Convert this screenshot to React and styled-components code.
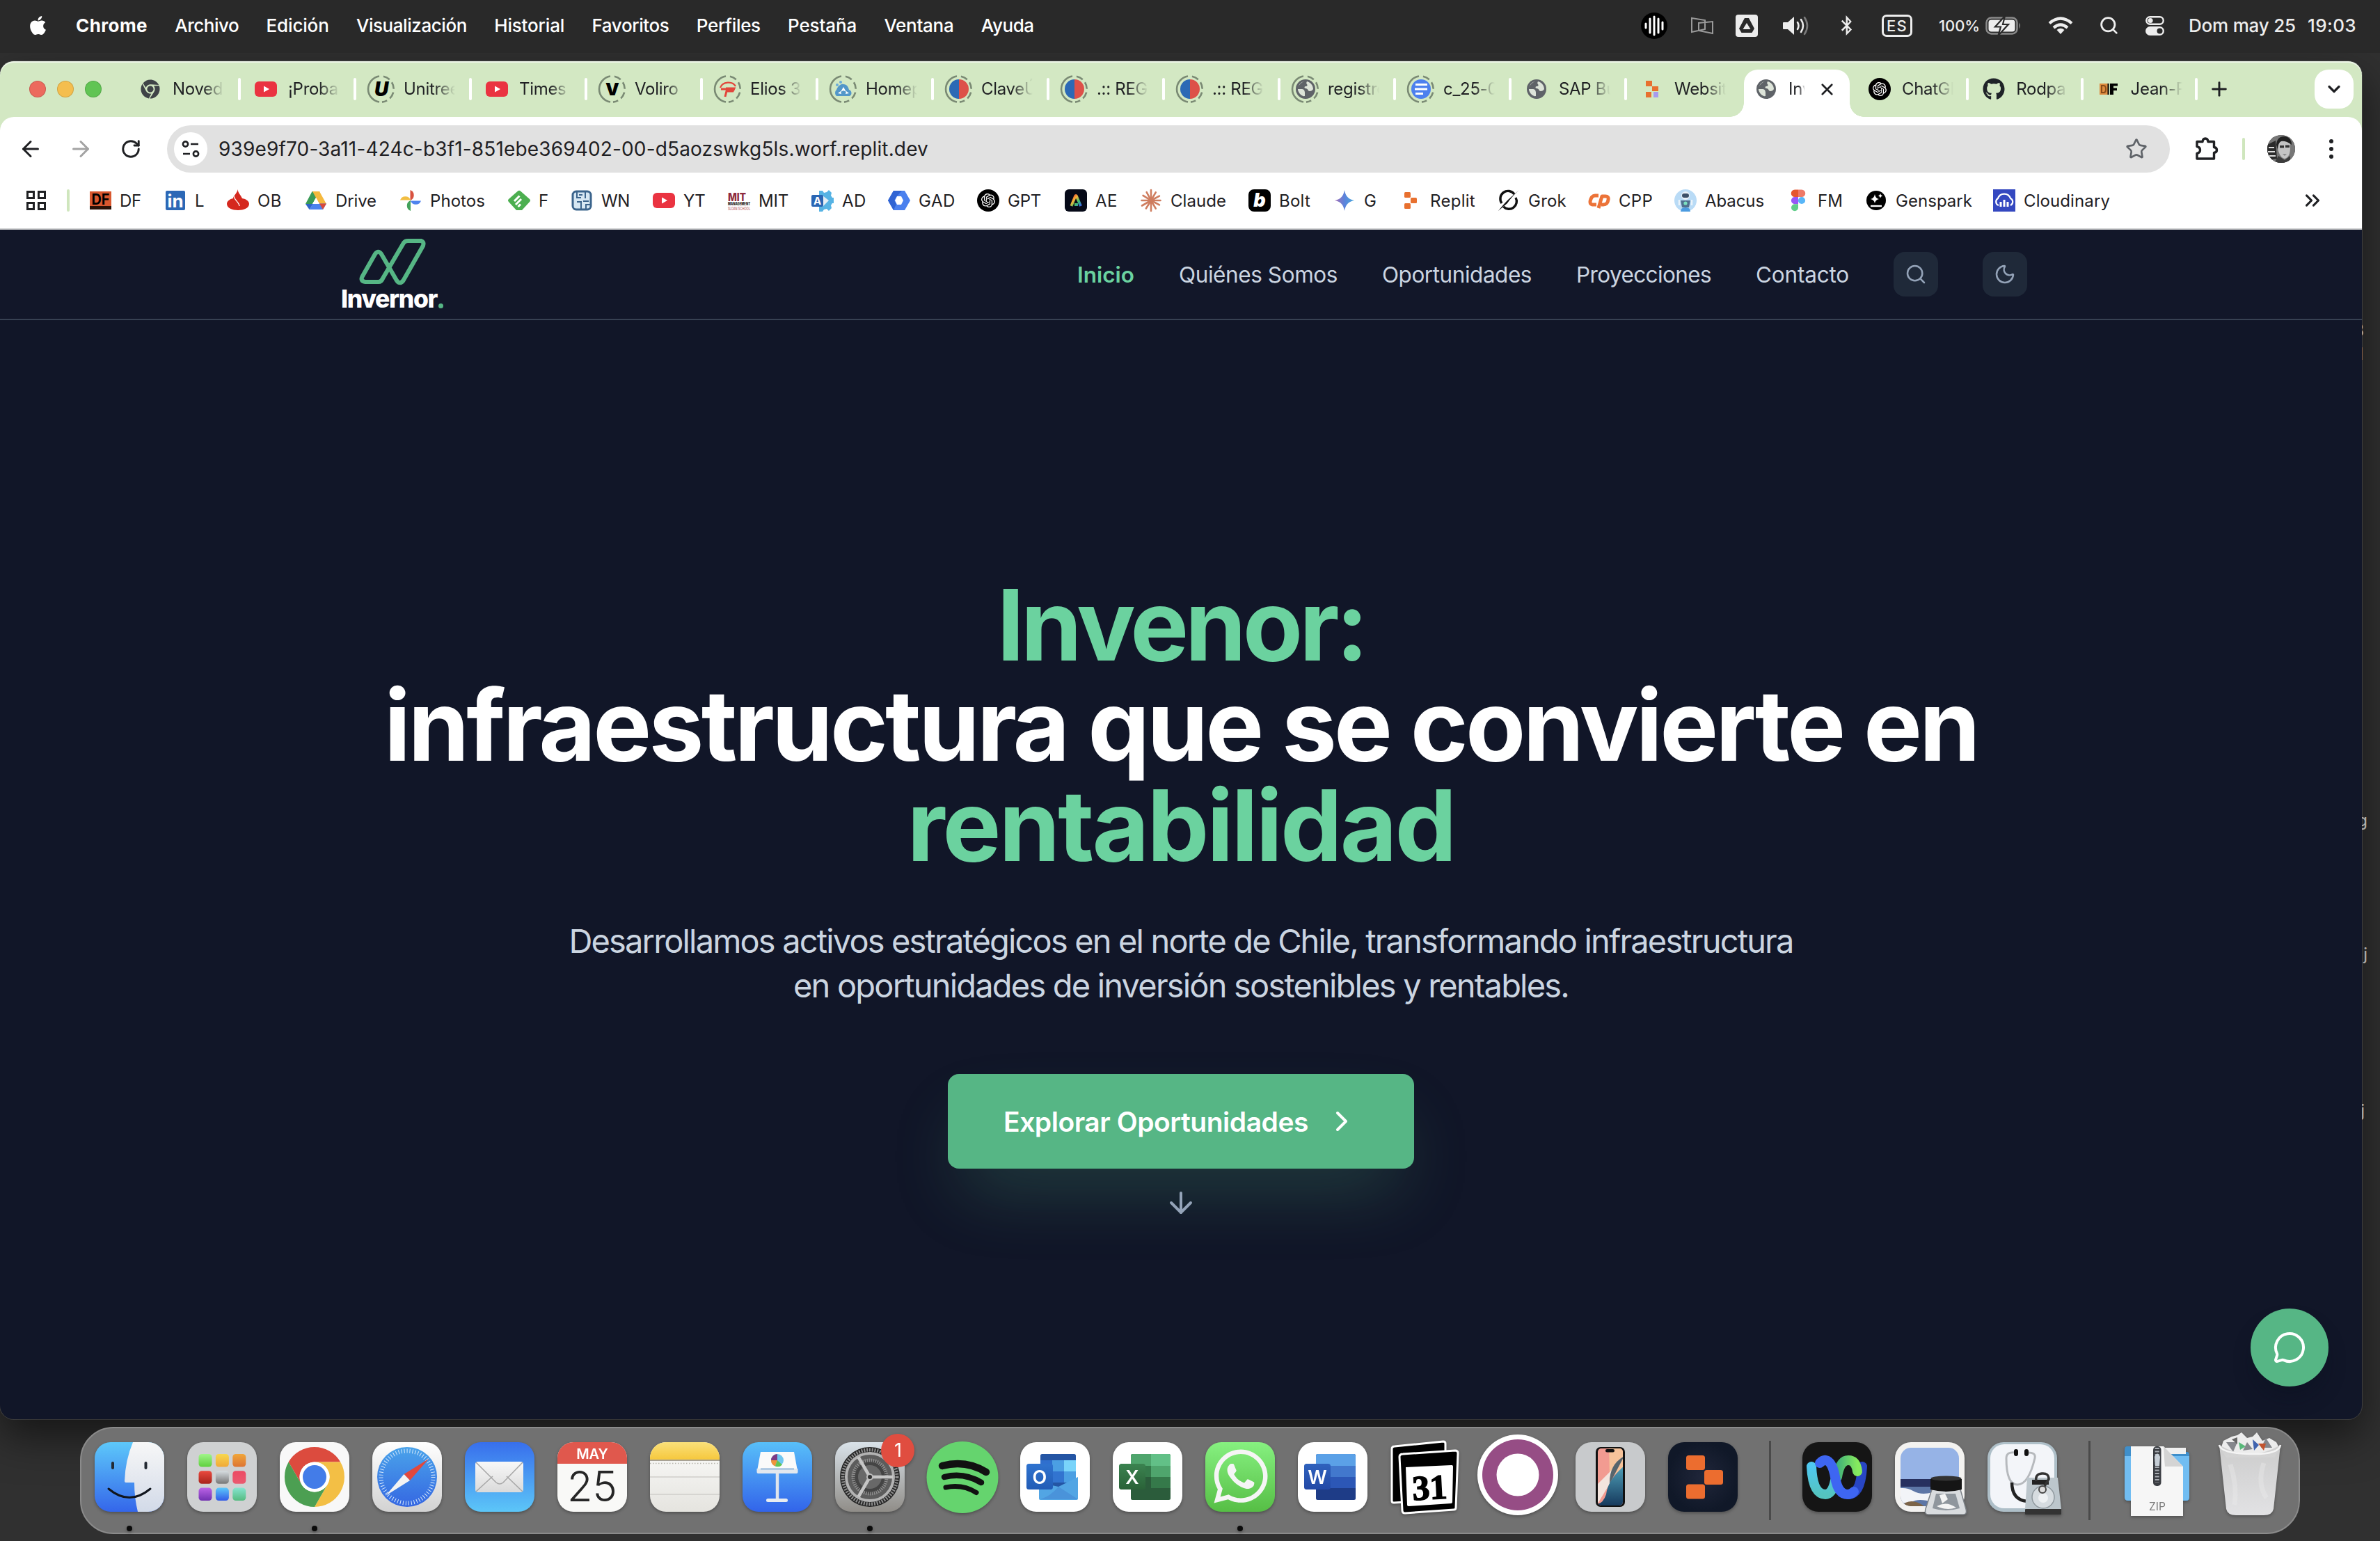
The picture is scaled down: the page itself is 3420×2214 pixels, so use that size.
import React, { useLayoutEffect, useRef, useState } from "react";
import styled, { createGlobalStyle } from "styled-components";
import {
  ArrowDown, ArrowLeft, ArrowRight, ChevronDown, ChevronRight, ChevronsRight,
  MessageCircle, Moon, Plus, RotateCw, Search, Star, X,
} from "lucide-react";
import { FaApple, FaBluetoothB, FaChrome, FaGithub, FaWhatsapp } from "react-icons/fa";
import { SiOpenai } from "react-icons/si";

const sans = `Inter, "Liberation Sans", sans-serif`;

const GlobalStyle = createGlobalStyle`
  * { box-sizing: border-box; }
  html, body { margin: 0; padding: 0; background: #2f2f2f; }
  body { font-family: ${sans}; width: 3420px; height: 2214px; overflow: hidden; }
  svg { display: block; flex: none; overflow: visible; }
`;

/* ---------- Text fitted to a width by tracking ---------- */

const FitSpan = styled.span`
  display: inline-block;
  white-space: pre;
`;

function Fit({ width, children }) {
  const ref = useRef(null);
  const [tracking, setTracking] = useState(0);
  useLayoutEffect(() => {
    const natural = ref.current.getBoundingClientRect().width;
    setTracking((width - natural) / children.length);
  }, [width, children]);
  return <FitSpan ref={ref} style={{ letterSpacing: `${tracking}px` }}>{children}</FitSpan>;
}

/* ---------- Desktop and menu bar ---------- */

const Desktop = styled.div`
  position: relative;
  display: flex;
  flex-direction: column;
  width: 3420px;
  height: 2214px;
  overflow: hidden;
  background: #303030;
`;

const DesktopLabel = styled.span`
  position: absolute;
  right: ${(p) => p.$right}px;
  top: ${(p) => p.$top}px;
  font-size: 24px;
  line-height: 30px;
  color: #e6e6e6;
`;

const MenuBar = styled.header`
  position: relative;
  z-index: 2;
  display: flex;
  align-items: center;
  height: 76px;
  padding: 0 35px 3px 39px;
  background: #292929;
  color: #fff;
  font-size: 26px;
`;

const MenuList = styled.nav`
  display: flex;
  gap: 39.3px;
  margin-left: 39px;
`;

const MenuEntry = styled.span`
  font-weight: ${(p) => (p.$bold ? 700 : 500)};
`;

const StatusArea = styled.div`
  display: flex;
  align-items: center;
  margin-left: auto;
  color: #ededed;
`;

const StatusItem = styled.div`
  display: flex;
  align-items: center;
  gap: 8px;
  width: ${(p) => p.$w}px;
  height: 40px;
  font-size: ${(p) => p.$size || 26}px;
  font-weight: 500;
`;

const LangBox = styled.div`
  display: flex;
  align-items: center;
  justify-content: center;
  width: 44px;
  height: 32px;
  border: 3px solid #ededed;
  border-radius: 7px;
  font-size: 22px;
  font-weight: 500;
`;

/* ---------- Browser window ---------- */

const Window = styled.main`
  position: relative;
  display: flex;
  flex-direction: column;
  width: 3394px;
  height: 1951px;
  margin-top: 12px;
  border-radius: 20px;
  background: #111628;
  box-shadow: 0 0 0 1px rgba(255, 255, 255, 0.12), 0 24px 60px rgba(0, 0, 0, 0.55);
`;

const TabStrip = styled.div`
  display: flex;
  align-items: center;
  height: 80px;
  flex: none;
  padding: 0 12px 0 42px;
  background: #d3e8c3;
  border-radius: 20px 20px 0 0;
  box-shadow: inset 0 2px 0 #eef6e8;
`;

const Lights = styled.div`
  display: flex;
  gap: 16px;
  width: 136px;
`;

const Light = styled.i`
  width: 24px;
  height: 24px;
  border-radius: 50%;
  background: ${(p) => p.$c};
  border: 1px solid rgba(0, 0, 0, 0.14);
`;

const TabItem = styled.div`
  display: flex;
  align-items: center;
  width: ${(p) => p.$w || 166}px;
  height: 80px;
  flex: none;
  padding-left: 18px;
  border-radius: 20px;
`;

const Favicon = styled.div`
  display: flex;
  align-items: center;
  justify-content: center;
  width: 40px;
  height: 40px;
  flex: none;
`;

const TabTitle = styled.span`
  width: ${(p) => p.$w || 74}px;
  margin-left: 12px;
  overflow: hidden;
  white-space: nowrap;
  font-size: 24px;
  letter-spacing: -0.3px;
  color: #1f2023;
  line-height: 40px;
  mask-image: linear-gradient(90deg, #000 60%, transparent 100%);
`;

const TabRule = styled.i`
  width: 4px;
  height: 32px;
  margin-left: auto;
  margin-right: -2px;
  border-radius: 2px;
  background: #fff;
`;

const ActiveTab = styled.div`
  position: relative;
  display: flex;
  align-items: center;
  width: 152px;
  height: 68px;
  flex: none;
  margin: 12px 5px 0 4px;
  padding: 0 22px 12px 12px;
  background: #fff;
  border-radius: 20px 20px 0 0;
  &::before, &::after {
    content: "";
    position: absolute;
    bottom: 0;
    width: 20px;
    height: 20px;
  }
  &::before {
    left: -20px;
    background: radial-gradient(circle at 0 0, transparent 19.5px, #fff 20px);
  }
  &::after {
    right: -20px;
    background: radial-gradient(circle at 100% 0, transparent 19.5px, #fff 20px);
  }
`;

const CloseMark = styled.span`
  margin-left: auto;
  margin-right: -3px;
`;

const NewTab = styled.span`
  margin-left: 17px;
`;

const TabSearch = styled.div`
  display: flex;
  align-items: center;
  justify-content: center;
  width: 56px;
  height: 56px;
  margin-left: auto;
  border-radius: 20px;
  background: #fff;
`;

const ToolbarBack = styled.div`
  flex: none;
  background: #d3e8c3;
`;

const Toolbar = styled.div`
  display: flex;
  align-items: center;
  height: 92px;
  padding: 0 20px 0 28px;
  background: #fff;
  color: #1f2023;
  border-radius: 20px 20px 0 0;
`;

const ToolIcon = styled.div`
  display: flex;
  align-items: center;
  justify-content: center;
  width: ${(p) => p.$w || 72}px;
  flex: none;
  color: ${(p) => p.$c || "#1f2023"};
`;

const Omnibox = styled.div`
  display: flex;
  align-items: center;
  width: 2878px;
  height: 68px;
  flex: none;
  padding: 0 32px 0 10px;
  border-radius: 34px;
  background: #e1e1e1;
  font-size: 28px;
`;

const SiteInfo = styled.div`
  display: flex;
  align-items: center;
  justify-content: center;
  width: 48px;
  height: 48px;
  margin-right: 16px;
  border-radius: 50%;
  background: #fff;
`;

const StarSlot = styled.span`
  margin-left: auto;
`;

const GreenRule = styled.i`
  width: 4px;
  height: 32px;
  flex: none;
  border-radius: 2px;
  background: #cfe6bd;
`;

const Avatar = styled.div`
  width: 40px;
  height: 40px;
  border-radius: 50%;
  overflow: hidden;
  background: #3a3a3a;
`;

const BookmarkBar = styled.div`
  display: flex;
  align-items: center;
  height: 70px;
  flex: none;
  padding: 0 54px 14px 38px;
  background: #fff;
  font-size: 24px;
  color: #1f2023;
  box-shadow: inset 0 -2px 0 #cfd0d2;
`;

const GridSlot = styled.div`
  width: 58px;
`;

const Bookmark = styled.div`
  display: flex;
  align-items: center;
  gap: 12px;
  width: ${(p) => p.$w}px;
  flex: none;
`;

const BookmarkIcon = styled.span`
  display: flex;
  align-items: center;
  justify-content: center;
  width: 32px;
  height: 32px;
  flex: none;
`;

const Overflow = styled.div`
  margin-left: auto;
`;

/* ---------- Web page ---------- */

const SiteHeader = styled.div`
  display: flex;
  align-items: center;
  justify-content: space-between;
  height: 130px;
  flex: none;
  padding: 0 481px 0 490px;
  border-bottom: 2px solid #374152;
  background: #121729;
`;

const Brand = styled.div`
  display: flex;
  flex-direction: column;
  align-items: flex-start;
  padding-top: 5px;
`;

const BrandName = styled.div`
  margin-top: -2px;
  font-size: 35.5px;
  line-height: 42px;
  font-weight: 800;
  color: #fff;
  display: flex;
`;

const BrandDot = styled.i`
  align-self: flex-end;
  width: 7px;
  height: 7px;
  border-radius: 50%;
  background: #56b685;
  margin: 0 0 8px 2px;
`;

const SiteNav = styled.nav`
  display: flex;
  align-items: center;
  gap: 64px;
`;

const NavLink = styled.a`
  font-size: 31.5px;
  font-weight: ${(p) => (p.$active ? 600 : 400)};
  color: ${(p) => (p.$active ? "#6bd29f" : "#cbd5e1")};
`;

const RoundButton = styled.button`
  display: flex;
  align-items: center;
  justify-content: center;
  width: 64px;
  height: 64px;
  padding: 0;
  border: 0;
  border-radius: 16px;
  background: #1f2939;
  color: #94a3b8;
`;

const Hero = styled.section`
  display: flex;
  flex-direction: column;
  align-items: center;
  padding-top: 366px;
`;

const Title = styled.h1`
  margin: 0 0 62px;
  display: flex;
  flex-direction: column;
  align-items: center;
  font-size: 141px;
  line-height: 144px;
  font-weight: 700;
  color: #fff;
`;

const TitleAccent = styled.span`
  color: #6bd29f;
`;

const Lead = styled.p`
  display: flex;
  flex-direction: column;
  align-items: center;
  margin: 0 0 95px;
  font-size: 47px;
  line-height: 64px;
  color: #cbd5e1;
`;

const Cta = styled.button`
  display: flex;
  align-items: center;
  justify-content: space-between;
  width: 670px;
  height: 136px;
  padding: 0 80px;
  border: 0;
  border-radius: 16px;
  background: #56b685;
  box-shadow: 0 50px 100px -24px rgba(86, 182, 133, 0.27);
  color: #fff;
  font-family: inherit;
  font-size: 39px;
  font-weight: 600;
`;

const ScrollHint = styled.div`
  margin-top: 25px;
  color: #94a3b8;
`;

const ChatButton = styled.button`
  position: absolute;
  right: 48px;
  bottom: 47px;
  display: flex;
  align-items: center;
  justify-content: center;
  width: 112px;
  height: 112px;
  border: 0;
  border-radius: 50%;
  background: #56b685;
  color: #fff;
  box-shadow: 0 20px 30px -6px rgba(10, 14, 28, 0.35);
`;

/* ---------- Dock ---------- */

const Dock = styled.footer`
  position: relative;
  display: flex;
  width: 3190px;
  height: 154px;
  margin: 11px 0 0 115px;
  padding-left: 2px;
  border: 2px solid #8b8b8b;
  border-radius: 48px;
  background: #717171;
`;

const DockSlot = styled.div`
  position: relative;
  display: flex;
  flex-direction: column;
  align-items: center;
  width: 133.05px;
  padding-top: 20px;
  flex: none;
  filter: drop-shadow(0 2px 2px rgba(0, 0, 0, 0.3));
`;

const RunningDot = styled.i`
  width: 8px;
  height: 8px;
  margin-top: 20px;
  border-radius: 50%;
  background: #0a0a0a;
`;

const DockRule = styled.i`
  width: 3px;
  height: 114px;
  margin: 18px 28.5px 0;
  background: #4a4a4a;
  flex: none;
`;

const Badge = styled.span`
  position: absolute;
  top: 8px;
  left: 83px;
  width: 48px;
  height: 48px;
  border-radius: 50%;
  background: #e04d40;
  color: #fff;
  font-size: 27px;
  line-height: 48px;
  text-align: center;
`;

/* ---------- Small drawings ---------- */

const Svg = ({ s = 32, vb = 32, children, ...rest }) => (
  <svg width={s} height={s} viewBox={`0 0 ${vb} ${vb}`} {...rest}>{children}</svg>
);

const YouTube = () => (
  <Svg><rect y="5" width="32" height="22" rx="6" fill="#ea3341" /><path d="M13 11.5v9l8-4.500z" fill="#fff" /></Svg>
);

const Globe = () => (
  <Svg s={28} vb={28}>
    <circle cx="14" cy="14" r="14" fill="#5f6368" />
    <path d="M12 3c-5 2-9 6-9 11l6 0c3 0 4 3 4 5v5c-4 1-9-4-10-9 0-7 4-11 9-12zM16 3c5 1 9 6 9 11-1 2-3 3-5 3-3 0-2-4-6-4-2 0-2-3 0-3 3 0 3-2 2-3s-1-2 0-4z" fill="#e8efe3" opacity=".92" />
  </Svg>
);

const OpenAi = () => (
  <Svg><circle cx="16" cy="16" r="16" fill="#000" /><SiOpenai x="6" y="6" size={20} color="#fff" /></Svg>
);

const HalfDisc = () => (
  <Svg s={28} vb={28}><path d="M14 0a14 14 0 0 0 0 28z" fill="#2c69b5" /><path d="M14 0a14 14 0 0 1 0 28z" fill="#dd5149" /></Svg>
);

const RingOutline = styled.span`
  position: relative;
  display: flex;
  align-items: center;
  justify-content: center;
  width: 40px;
  height: 40px;
  svg.ring { position: absolute; inset: 0; }
`;

const Ringed = ({ children }) => (
  <RingOutline>
    {children}
    <svg className="ring" width="40" height="40" viewBox="0 0 40 40" fill="none" stroke="#7a8a74" strokeWidth="2.600">
      <path d="M17 38.500A18.700 18.700 0 0 1 17 1.500" />
      <path d="M21 1.400A18.700 18.700 0 0 1 21 38.600" strokeDasharray="10 5" strokeDashoffset="-2" />
    </svg>
  </RingOutline>
);

const Glyph = styled.b`
  font-size: ${(p) => p.$s || 24}px;
  font-weight: 900;
  font-style: ${(p) => (p.$i ? "italic" : "normal")};
  color: #000;
  line-height: 1;
`;

const ReplitMark = ({ s = 28 }) => (
  <Svg s={s} vb={28} fill="#e8702f">
    <rect x="5" y="2" width="9" height="8" rx="1.500" /><rect x="14" y="10" width="9" height="8" rx="1.500" /><rect x="5" y="18" width="9" height="8" rx="1.500" />
  </Svg>
);

const Cloud = () => (
  <Svg s={28} vb={28}>
    <path d="M4 24a6 6 0 0 1 0-9c2-5 6-9 10-8 5 0 7 4 8 8 4 1 5 7 1 9z" fill="#5397c9" />
    <path d="M14 11l4 7-4-2-4 2zM6 20l4-3 1 4zM22 20l-4-3-1 4z" fill="#fff" />
    <circle cx="5" cy="8" r="2" fill="#6aabd8" /><circle cx="10" cy="4" r="2" fill="#6aabd8" />
  </Svg>
);

const DocDisc = () => (
  <Svg s={28} vb={28}>
    <circle cx="14" cy="14" r="14" fill="#4d80ee" />
    <path d="M6 7.500h17M5 14h18M6 20.500h11" stroke="#fff" strokeWidth="3.200" />
  </Svg>
);

const tabsBefore = [
  { title: "Noved", icon: <FaChrome size={28} color="#3f4347" /> },
  { title: "¡Proba", icon: <YouTube /> },
  { title: "Unitree", icon: <Ringed><Glyph $i $s={28}>U</Glyph></Ringed> },
  { title: "Times", icon: <YouTube /> },
  { title: "Voliro", icon: <Ringed><Glyph $s={25}>V</Glyph></Ringed> },
  { title: "Elios 3", icon: <Ringed><Svg s={28} vb={28}><path d="M3 12c3-9 18-10 22-2" stroke="#e2463c" fill="none" strokeWidth="2.200" /><path d="M4 14h20M11 13h12l-2 4h-9l-2 8" stroke="#e2463c" fill="none" strokeWidth="3" /></Svg></Ringed> },
  { title: "Homep", icon: <Ringed><Cloud /></Ringed> },
  { title: "ClaveÚ", icon: <Ringed><HalfDisc /></Ringed> },
  { title: ".:: REG", icon: <Ringed><HalfDisc /></Ringed> },
  { title: ".:: REG", icon: <Ringed><HalfDisc /></Ringed> },
  { title: "registro", icon: <Ringed><Globe /></Ringed> },
  { title: "c_25-0", icon: <Ringed><DocDisc /></Ringed> },
  { title: "SAP Bu", icon: <Globe /> },
  {
    title: "Websit",
    noRule: true,
    icon: (
      <Svg s={28} vb={28}>
        <rect x="5" y="2" width="9" height="8" fill="#e8702f" /><rect x="14" y="10" width="9" height="7" fill="#e8702f" />
        <rect x="5" y="18" width="8" height="8" fill="#e8702f" /><rect x="16" y="18" width="7" height="8" fill="#a79bf0" />
      </Svg>
    ),
  },
];

const tabsAfter = [
  { title: "ChatGPT", icon: <OpenAi /> },
  { title: "Rodpa", icon: <FaGithub size={32} color="#1f2328" /> },
  { title: "Jean-P", icon: <Svg><rect x="3" y="8" width="12" height="16" fill="#dd8b3f" /><path d="M6 11h3q3 0 3 5t-3 5h-3z" stroke="#8a4c1a" strokeWidth="2" fill="none" /><path d="M18 8h11v3.500h-6v3h5v3.500h-5v6h-5z" /><rect x="14.500" y="8" width="2" height="16" fill="#000" /></Svg> },
];

const Tab = ({ tab, w }) => (
  <TabItem $w={w}>
    <Favicon>{tab.icon}</Favicon>
    <TabTitle>{tab.title}</TabTitle>
    {!tab.noRule && <TabRule />}
  </TabItem>
);

const bookmarks = [
  { w: 108, t: "DF", tw: 31, icon: <Svg><rect x="1" y="3" width="31" height="26" fill="#d9582f" /><rect x="1" y="24" width="31" height="5" fill="#2a1208" /><text x="16.500" y="22" fontSize="21" fontWeight="700" textAnchor="middle" textLength="26" lengthAdjust="spacingAndGlyphs">DF</text></Svg> },
  { w: 90, t: "L", tw: 14, icon: <Svg><rect x="2" y="2" width="28" height="28" rx="2" fill="#2c68b6" /><text x="16" y="26" fontSize="25" fontWeight="700" fill="#fff" textAnchor="middle" textLength="23" lengthAdjust="spacingAndGlyphs">in</text></Svg> },
  { w: 112, t: "OB", tw: 35, icon: <Svg><path d="M16 0c-1 4 4 8 6 13 6 1 10 4 10 8 0 6-8 9-16 9S0 27 0 21c0-4 4-7 9-8 0-3 2-4 4-7s2-4 3-6z" fill="#d5281e" /><path d="M10 9c0 6 8 10 8 15" stroke="#fff" strokeWidth="1.300" fill="none" /></Svg> },
  { w: 136, t: "Drive", tw: 59, icon: <Svg><path d="M10.500 3h11L11 21H1z" fill="#3a9b57" /><path d="M11 3h10l10 18H21z" fill="#f5b93e" /><path d="M6.500 29l5-8.500H31L26 29z" fill="#4b83ee" /><path d="M1 21h10.500l-5 8z" fill="#2f65c8" /><path d="M16 12l-5 9h10z" fill="#fff" /><path d="M21 20.500h10L26 29z" fill="#d8493b" /></Svg> },
  { w: 156, t: "Photos", tw: 79, icon: <Svg><path d="M15.500 1a8 8 0 0 1 0 15z" fill="#d8523f" /><path d="M1 15.500a8 8 0 0 1 15 0z" fill="#f2be42" /><path d="M16 16.500a8 8 0 0 0 15 0z" fill="#4f83ee" /><path d="M16 31a8 8 0 0 1 0-15z" fill="#43a25b" /></Svg> },
  { w: 90, t: "F", tw: 15, icon: <Svg><path d="M13.500 3q2.500-2.500 5 0L31 14q2 2 0 4L20 30h-8L1 18q-2-2 0-4z" fill="#4caf50" /><path d="M9 17l7.500-7.500M11 22l8-8M14.500 25l3.500-3.500" stroke="#fff" strokeWidth="3" /></Svg> },
  { w: 118, t: "WN", tw: 41, icon: <Svg><rect x="3" y="3" width="26" height="26" rx="5" fill="#d6e7f3" stroke="#3b648c" strokeWidth="3" /><path d="M9 4v8h6M9 18h6v10M22 28v-6h6M21 4v9M12 8h5M18 17h8" stroke="#3b648c" strokeWidth="2" fill="none" /></Svg> },
  { w: 108, t: "YT", tw: 31, icon: <YouTube /> },
  { w: 120, t: "MIT", tw: 43, icon: <Svg><text x="0" y="17" fontSize="16" fontWeight="800" fill="#8f2a3c" textLength="26" lengthAdjust="spacingAndGlyphs">MIT</text><text x="0" y="23" fontSize="6" fontWeight="800" fill="#222" textLength="32" lengthAdjust="spacingAndGlyphs">MANAGEMENT</text><text x="0" y="30" fontSize="6" fill="#b0444f" textLength="32" lengthAdjust="spacingAndGlyphs">SLOAN SCHOOL</text></Svg> },
  { w: 110, t: "AD", tw: 35, icon: <Svg><path d="M11 2h5l2 3 4-1 3-3 4 4-1 4 2 3h2v8h-2l-2 3 1 4-4 4-3-3-4 1-2 3h-5z" fill="#56b3e4" /><path d="M16 9l9 7-9 9z" fill="#e4eef5" /><rect x="0" y="8" width="17" height="17" rx="2" fill="#2a66b4" /><text x="8.500" y="22" fontSize="15" fontWeight="700" fill="#fff" textAnchor="middle">A</text></Svg> },
  { w: 128, t: "GAD", tw: 53, icon: <Svg><path d="M8 2h16l8 14-8 14H8L0 16z" fill="#4a80ee" /><path d="M8 2h12l-8 9-3 5 3 5-4 9L0 16z" fill="#2f63d3" /><path d="M13 10h6l3 6-3 6h-6l-3-6z" fill="#fff" /></Svg> },
  { w: 126, t: "GPT", tw: 48, icon: <OpenAi /> },
  { w: 108, t: "AE", tw: 32, icon: <Svg><defs><linearGradient id="ae" x1="0" y1="0" x2="1" y2="1"><stop offset="0" stopColor="#e8372f" /><stop offset=".35" stopColor="#f6b338" /><stop offset=".65" stopColor="#3fc46c" /><stop offset="1" stopColor="#3b64f0" /></linearGradient></defs><rect width="32" height="32" rx="6" fill="#060a18" /><path d="M9.500 24L15 10q1-2 2 0l6 14M14 22h5" stroke="url(#ae)" strokeWidth="4" fill="none" /></Svg> },
  { w: 156, t: "Claude", tw: 80, icon: <Svg><g stroke="#cf7d5f" strokeWidth="2.600" strokeLinecap="round">{[0, 30, 62, 90, 118, 150, 180, 212, 240, 270, 302, 332].map((a) => <path key={a} d={`M16 16V${a % 60 ? 2.5 : 1}`} transform={`rotate(${a} 16 16)`} />)}</g></Svg> },
  { w: 122, t: "Bolt", tw: 45, icon: <Svg><rect width="32" height="32" rx="8" fill="#000" /><text x="16" y="25" fontSize="27" fontWeight="900" fontStyle="italic" fill="#fff" textAnchor="middle">b</text></Svg> },
  { w: 95, t: "G", tw: 19, icon: <Svg><defs><linearGradient id="gm"><stop offset="0" stopColor="#a66fb4" /><stop offset=".5" stopColor="#5b83dc" /><stop offset="1" stopColor="#49a8dc" /></linearGradient></defs><path d="M16 1q2 13 14 15-12 2-14 15-2-13-14-15Q14 14 16 1z" fill="url(#gm)" /></Svg> },
  { w: 141, t: "Replit", tw: 65, icon: <ReplitMark /> },
  { w: 130, t: "Grok", tw: 55, icon: <Svg><path d="M24 7a11 11 0 0 0-18 13M8.500 25A11 11 0 0 0 26 12" stroke="#111" strokeWidth="3.400" fill="none" /><path d="M31 1Q19 12 14 20L1 31q8-10 14-16z" fill="#111" /></Svg> },
  { w: 124, t: "CPP", tw: 49, icon: <Svg><path d="M15 9h-5q-4 0-6 5t0 7q1 1 4 1h4M15 27l5-17h5q5 0 4 5-1 7-7 7h-3" stroke="#ec7338" strokeWidth="5" fill="none" strokeLinejoin="round" /></Svg> },
  { w: 162, t: "Abacus", tw: 85, icon: <Svg><circle cx="16" cy="16" r="16" fill="#b9dbf6" /><circle cx="16" cy="9" r="6" fill="#e8f1f8" /><rect x="11" y="6" width="10" height="6" rx="3" fill="#3c5068" /><path d="M9 16h14l-2 10H11z" fill="#4f6f8e" /><path d="M9 32q0-6 7-6t7 6z" fill="#4b9be0" /><circle cx="16" cy="20" r="2.600" fill="#7be0c0" /><path d="M7 15v8M25 15v8" stroke="#eaf3fa" strokeWidth="2.500" /></Svg> },
  { w: 112, t: "FM", tw: 36, icon: <Svg><path d="M16 0.500h-5a5 5 0 0 0 0 10.500h5z" fill="#e5562e" /><path d="M16 .5h5a5 5 0 0 1 0 10.500h-5z" fill="#ee7a68" /><path d="M16 11h-5a5 5 0 0 0 0 10.200h5z" fill="#9757f6" /><circle cx="21" cy="16" r="5.100" fill="#58b6f8" /><path d="M16 21.300h-5a5 5 0 1 0 5 5z" fill="#61cd8a" /></Svg> },
  { w: 184, t: "Genspark", tw: 110, icon: <Svg><circle cx="16" cy="16" r="14" fill="#000" /><path d="M14 7q1 6 6 7-5 1-6 6-1-5-6-6 5-1 6-7zM22 6q.5 3 3 3.500-2.500.5-3 3-.5-2.500-3-3 2.500-.5 3-3.500z" fill="#fff" /><path d="M8 24h16" stroke="#fff" strokeWidth="2.400" /></Svg> },
  { w: 200, t: "Cloudinary", tw: 124, icon: <Svg><rect width="32" height="32" fill="#3448c0" /><path d="M8 23a5.500 5.500 0 0 1-1-10 9.500 9.500 0 0 1 18 0 5.500 5.500 0 0 1 0 10" stroke="#fff" strokeWidth="2.200" fill="none" /><path d="M11 18v7M16 15v10M21 18v7" stroke="#fff" strokeWidth="3" /></Svg> },
];

/* ---------- Dock icons, drawn on a 100 x 100 tile ---------- */

const Tile = ({ children, fill, clip }) => (
  <svg width="100" height="100" viewBox="0 0 100 100">
    <defs><clipPath id="tile"><rect width="100" height="100" rx="23" /></clipPath></defs>
    {fill && <rect width="100" height="100" rx="23" fill={fill} />}
    {clip ? <g clipPath="url(#tile)">{clip}</g> : null}
    {children}
  </svg>
);

const Grad = ({ id, a, b, h }) => (
  <linearGradient id={id} x1="0" y1="0" x2={h ? 1 : 0} y2={h ? 0 : 1}>
    <stop offset="0" stopColor={a} /><stop offset="1" stopColor={b} />
  </linearGradient>
);

const Finder = () => (
  <Tile clip={<>
    <defs><Grad id="fb" a="#5dc8fa" b="#3466ea" /><Grad id="fw" a="#f7f7f7" b="#d2dae8" /></defs>
    <rect width="100" height="100" fill="url(#fb)" />
    <path d="M55 0Q44 26 43 56q0 2 2 2h12q0 22 5 42h40V0z" fill="url(#fw)" />
    <path d="M26 30v7M73.500 30v7" stroke="#232a33" strokeWidth="4" strokeLinecap="round" />
    <path d="M20 67q30 25 60 0" stroke="#10151d" strokeWidth="3" fill="none" strokeLinecap="round" />
  </>} />
);

const launch = [["#a0f58a", "#5fd03f"], ["#f8d84f", "#f0a838"], ["#f0a63a", "#dd7433"], ["#ea4a3e", "#a8231b"], ["#d6dde0", "#777"], ["#ec4b64", "#ea5a70"], ["#bb63e6", "#7030b0"], ["#5cc8fb", "#3359e6"], ["#86e4cf", "#55bb80"]];
const Launchpad = () => (
  <Tile fill="#cfd1d2">
    {launch.map(([a, b], i) => (
      <g key={i}>
        <defs><Grad id={`lp${i}`} a={a} b={b} /></defs>
        <rect x={16.5 + (i % 3) * 24.4} y={17 + Math.floor(i / 3) * 24.3} width="19" height="18.500" rx="4.500" fill={`url(#lp${i})`} />
      </g>
    ))}
  </Tile>
);

const ChromeApp = () => (
  <Tile fill="#f8f8f8">
    <path d="M12.600 28.500A43 43 0 0 1 87.200 28.500H50a21.500 21.500 0 0 0-18.600 32.200z" fill="#dc4b3e" />
    <path d="M87.200 28.500A43 43 0 0 1 50 93l18.600-32.200A21.500 21.500 0 0 0 50 28.500z" fill="#f3bf45" />
    <path d="M50 93A43 43 0 0 1 12.700 28.500l18.700 32.200a21.500 21.500 0 0 0 37.200 0z" fill="#4c9f52" />
    <circle cx="50" cy="50" r="21.500" fill="#fff" /><circle cx="50" cy="50" r="17" fill="#437ce8" />
  </Tile>
);

const Safari = () => (
  <Tile fill="url(#sfw)">
    <defs><Grad id="sfw" a="#ffffff" b="#d2d2d2" /><Grad id="sf" a="#4aa3ea" b="#3567e2" /></defs>
    <circle cx="50" cy="50" r="43" fill="url(#sf)" />
    <circle cx="50" cy="50" r="37.500" stroke="#d6e9fb" strokeWidth="6" strokeDasharray="1 3" fill="none" />
    <path d="M81 24L45.500 46l8.500 9z" fill="#e2483c" /><path d="M19 77l26.500-31 8.500 9z" fill="#f3f3f3" />
  </Tile>
);

const Mail = () => (
  <Tile fill="url(#ml)">
    <defs><Grad id="ml" a="#386fec" b="#5cc6f8" /><Grad id="mw" a="#f8f8f8" b="#dadada" /></defs>
    <rect x="15" y="28" width="69" height="44" rx="4" fill="url(#mw)" />
    <path d="M16 71l24-22M83 71L60 49M16 29l29 29q5 4 10 0l28-29" stroke="#a8a8a8" strokeWidth="1.600" fill="none" />
  </Tile>
);

const Calendar = () => (
  <Tile clip={<>
    <rect width="100" height="100" fill="#f9f9f7" />
    <rect width="100" height="31" fill="#e0584d" />
    <text x="50" y="24" fontSize="20" fontWeight="600" fill="#fff" textAnchor="middle">MAY</text>
    <text x="50" y="85" fontSize="61" fontWeight="300" fill="#262626" textAnchor="middle" textLength="72" lengthAdjust="spacingAndGlyphs">25</text>
  </>} />
);

const Notes = () => (
  <Tile clip={<>
    <defs><Grad id="nt" a="#fae07a" b="#f6c83d" /><Grad id="nw" a="#fbfbfa" b="#e5e4df" /></defs>
    <rect width="100" height="100" fill="url(#nw)" /><rect width="100" height="25" fill="url(#nt)" />
    <path d="M0 26h100" stroke="#a8a295" strokeWidth="2" /><path d="M0 30.500h100" stroke="#b5b2aa" strokeWidth="1.500" strokeDasharray="1.500 2.500" />
    <path d="M0 50h100M0 75h100" stroke="#cfceca" strokeWidth="1.500" />
  </>} />
);

const Keynote = () => (
  <Tile fill="url(#kn)">
    <defs><Grad id="kn" a="#58bff9" b="#3264ea" /></defs>
    <path d="M50 44v38" stroke="#dfe5ec" strokeWidth="4.500" />
    <rect x="34" y="81" width="31" height="5" rx="2.500" fill="#e8ecf0" />
    <path d="M26 14h48l5 27H21z" fill="#fafafa" /><path d="M20.500 38h59l0 5q0 2-2 2h-55q-2 0-2-2z" fill="#e2e8ee" /><path d="M26 38.500h48" stroke="#a5c3df" strokeWidth="2.500" />
    <circle cx="50" cy="26" r="9" fill="#6fc6ef" /><path d="M50 26V17a9 9 0 0 0-9 9z" fill="#7c3a86" /><path d="M50 26h-9a9 9 0 0 0 6 8.500z" fill="#f0943a" /><path d="M50 26l-3 8.500a9 9 0 0 0 10-2z" fill="#61c554" />
  </Tile>
);

const Settings = () => (
  <Tile fill="url(#st)">
    <defs><Grad id="st" a="#d9e2e9" b="#908d88" /></defs>
    <circle cx="50" cy="50" r="43" fill="#252525" />
    <circle cx="50" cy="50" r="39" fill="none" stroke="#8f8f8f" strokeWidth="5" strokeDasharray="2 1.800" />
    <circle cx="50" cy="50" r="34" fill="#5c5c5c" stroke="#b3b3b3" strokeWidth="4" />
    <circle cx="50" cy="50" r="24" fill="#444" stroke="#8e8e8e" strokeWidth="5" strokeDasharray="1.500 1.500" />
    <circle cx="50" cy="50" r="17" fill="#686868" />
    <path d="M50 50h33M50 50L33.500 21.500M50 50L33.500 78.500" stroke="#c6c6c6" strokeWidth="4.500" />
    <circle cx="50" cy="50" r="4" fill="#333" stroke="#bbb" strokeWidth="2" />
  </Tile>
);

const Spotify = () => (
  <Tile>
    <circle cx="50" cy="50.500" r="51.500" fill="#65d46e" />
    <g stroke="#111" fill="none" strokeLinecap="round">
      <path d="M21 34q34-9 63 9" strokeWidth="10.500" /><path d="M24 50q28-7 53 8" strokeWidth="8.500" /><path d="M26 65q24-5 44 7.500" strokeWidth="7" />
    </g>
  </Tile>
);

const Plate = ({ from, to, letter }) => (
  <>
    <defs><Grad id={`pl${letter}`} a={from} b={to} /></defs>
    <rect x="9" y="31" width="38" height="37" rx="3.500" fill={`url(#pl${letter})`} />
    <text x="28" y="59.500" fontSize="27" fontWeight="600" fill="#fff" textAnchor="middle">{letter}</text>
  </>
);

const Outlook = () => (
  <Tile fill="#fff">
    <rect x="29" y="17" width="51" height="50" rx="2.500" fill="#2455a4" />
    <rect x="29" y="26" width="17" height="32" fill="#2f6fce" /><rect x="46" y="26" width="17" height="16" fill="#4b9fe3" /><rect x="63" y="26" width="17" height="16" fill="#79d4fa" />
    <rect x="46" y="42" width="17" height="16" fill="#3274d0" /><rect x="63" y="42" width="17" height="16" fill="#4b9fe3" />
    <path d="M27 58l28 6 28-14v31q0 2-2 2H29q-2 0-2-2z" fill="#52a5e4" /><path d="M55 64l28 18H29q14-4 26-18z" fill="#4a93da" />
    <Plate from="#2f73cf" to="#225cb6" letter="O" />
  </Tile>
);

const Excel = () => (
  <Tile fill="#fff">
    <rect x="26" y="17" width="57" height="66" rx="2.500" fill="#2b5c3b" />
    <path d="M28.500 17H55v17H26V19.500q0-2.500 2.500-2.500z" fill="#4fa56d" /><path d="M55 17h25.500q2.500 0 2.500 2.500V34H55z" fill="#62c087" />
    <rect x="26" y="34" width="29" height="16" fill="#35794a" /><rect x="55" y="34" width="28" height="16" fill="#4fa56d" /><rect x="55" y="50" width="28" height="16" fill="#35794a" />
    <Plate from="#3b8350" to="#2a6238" letter="X" />
  </Tile>
);

const Word = () => (
  <Tile fill="#fff">
    <rect x="26" y="17" width="57" height="66" rx="2.500" fill="#1e3c87" />
    <path d="M28.500 17h52q2.500 0 2.500 2.500V34H26V19.500q0-2.500 2.500-2.500z" fill="#5ba1e7" /><rect x="26" y="34" width="57" height="16" fill="#4278cd" /><rect x="26" y="50" width="57" height="16" fill="#2c57b6" />
    <Plate from="#2f62bd" to="#2349a6" letter="W" />
  </Tile>
);

const WhatsApp = () => (
  <Tile fill="url(#wa)">
    <defs><Grad id="wa" a="#86f080" b="#56be45" /></defs>
    <FaWhatsapp x="7" y="5" size={88} color="#f5f5f5" />
  </Tile>
);

const NotionCalendar = () => (
  <Tile>
    <g stroke="#fff" strokeWidth="3" strokeLinejoin="round">
      <path d="M6 6L76-1q3 0 3 3v80L5 87q-3 0-3-3V10q0-4 4-4z" fill="#000" />
      <path d="M18 17l75-5q4 0 4 4l-3 78q0 3-3 3l-70 5q-4 0-4-4L13 21q0-4 5-4z" fill="#000" />
    </g>
    <path d="M22 36l66-3q2 0 2 2l-1 51q0 2-2 2l-61 4q-2 0-2-2z" fill="#fff" />
    <text x="56" y="82" fontSize="50" fontFamily="Liberation Serif, serif" fontWeight="700" textAnchor="middle" transform="rotate(-3 56 60)" stroke="#000" strokeWidth="1.500" textLength="50" lengthAdjust="spacingAndGlyphs">31</text>
  </Tile>
);

const RingApp = () => (
  <Tile><circle cx="50" cy="47" r="58" fill="#fff" /><circle cx="50" cy="47" r="51" fill="#964d85" /><circle cx="50" cy="47" r="30.500" fill="#fff" /></Tile>
);

const Phone = () => (
  <Tile fill="#c8cacc">
    <defs><Grad id="ph" a="#4fa0b8" b="#14365a" /><clipPath id="phc"><rect x="32" y="9" width="36" height="82" rx="5" /></clipPath></defs>
    <rect x="29" y="7" width="42" height="86" rx="7" fill="#111" />
    <g clipPath="url(#phc)"><rect x="30" y="8" width="40" height="85" fill="#f29b91" /><path d="M48 8h22v30Q52 45 49 62q0-25-1-54z" fill="#f6c39a" /><path d="M70 22Q50 40 49 60L32 88V60z" fill="#f3e4dd" /><path d="M70 20Q48 32 49 60z" fill="#56646c" /><path d="M70 34Q46 55 44 75q-4 12-12 14v4h38z" fill="url(#ph)" /></g>
    <rect x="43" y="10" width="13" height="4.500" rx="2.200" fill="#111" />
  </Tile>
);

const ReplitApp = () => (
  <Tile fill="url(#rp)">
    <defs><radialGradient id="rp"><stop offset="0" stopColor="#20263a" /><stop offset="1" stopColor="#101828" /></radialGradient></defs>
    <g fill="#ec6d2f"><rect x="26" y="19" width="27" height="21" rx="3.500" /><rect x="52" y="40" width="27" height="21" rx="3.500" /><rect x="26" y="60.500" width="27" height="21" rx="3.500" /></g>
  </Tile>
);

const Webex = () => (
  <Tile fill="#151515">
    <defs><Grad id="wx1" a="#4fc8f0" b="#54c4c0" /><Grad id="wx2" a="#3fb07a" b="#86ea5e" h /></defs>
    <g fill="none" strokeWidth="14" strokeLinecap="round">
      <path d="M13 35q2 40 20 40 10 0 14-20" stroke="url(#wx1)" />
      <path d="M86 35q-2 40-20 40" stroke="#2846c4" />
      <path d="M50 50q4-24 16-24 11 0 13 16" stroke="url(#wx2)" />
      <path d="M25 30q5-5 9-4 9 2 13 24 4 25 18 25 5 0 9-4" stroke="#3e66f2" />
    </g>
  </Tile>
);

const Preview = () => (
  <Tile fill="#f3f2f0">
    <defs><clipPath id="pv"><rect x="8" y="8" width="84" height="84" rx="15" /></clipPath></defs>
    <g clipPath="url(#pv)"><rect width="100" height="54" fill="#96b3e6" /><rect y="53" width="100" height="12" fill="#27305f" /><rect y="64" width="100" height="40" fill="#5d76a6" /><path d="M0 68q14-5 26 2t28 2v14q-20-6-30 0T0 80z" fill="#f2f4f8" /><path d="M8 92q15-14 34 0z" fill="#7c6448" /></g>
    <path d="M53 68h41l8 28q2 8-4 8H48q-6 0-4-8z" fill="#d9dcdf" stroke="#7d8288" strokeWidth="1.500" /><path d="M59 74h28l6 21q-20 6-39 0z" fill="#8f969d" /><path d="M64 76l8-2 4 8-8 6zM60 92q14-8 28 2-14 5-28-2z" fill="#f4f4f4" />
    <path d="M51 53q22-6 45 0v15q-22 6-45 0z" fill="#151515" /><ellipse cx="73.500" cy="52" rx="22" ry="3.500" fill="#333" />
  </Tile>
);

const DiskUtility = () => (
  <Tile fill="#aebfc8">
    <rect x="4" y="3" width="92" height="92" rx="20" fill="#f3f5f9" />
    <path d="M41 15q-14-2-14 8 0 38 16 38t25-38q2-9-12-8" stroke="#b6b9bd" strokeWidth="3" fill="none" />
    <path d="M41 13v4M56 13v4" stroke="#111" strokeWidth="6" strokeLinecap="round" />
    <path d="M35 58q0 25 22 27" stroke="#222" strokeWidth="4.500" fill="none" />
    <path d="M57 51h44l5 45H54z" fill="#bcc6cc" /><rect x="54" y="96" width="52" height="8" rx="1" fill="#333" />
    <path d="M64 54h24v7H64z" fill="#222" /><circle cx="80" cy="79" r="16" fill="#d6dce0" stroke="#8f989e" strokeWidth="1.500" /><circle cx="80" cy="80" r="7" fill="#eef1f3" />
    <path d="M70 56q-2-10 8-11t10 8l-6 10" stroke="#333" strokeWidth="3.500" fill="none" /><circle cx="79" cy="68" r="5" fill="#ddd" stroke="#444" strokeWidth="2" />
  </Tile>
);

const Zip = () => (
  <Tile>
    <path d="M6 6h30l6 8h50q4 0 4 4v62q0 4-4 4H8q-5 0-5-5V12q0-6 3-6z" fill="#3f8fcb" />
    <path d="M3 20h93v59q0 5-5 5H8q-5 0-5-5z" fill="#71bdf2" /><rect x="58" y="8" width="33" height="9" fill="#f0f0f0" />
    <path d="M12 6h47l28 29v71H12z" fill="#f6f6f6" /><path d="M59 6q1 20 2 29h26z" fill="#d4d4d4" />
    <rect x="44" y="6" width="11.500" height="57" rx="5" fill="#3a3d42" /><path d="M49.700 8v50" stroke="#a9adb3" strokeWidth="6" strokeDasharray="2 2.500" />
    <path d="M46 21q4-9 8 0l-1 13h-6z" fill="#c6ced6" />
    <text x="50" y="98" fontSize="15.500" fill="#7a7a7a" textAnchor="middle">ZIP</text>
  </Tile>
);

const Trash = () => (
  <Tile>
    <defs><Grad id="tr" a="#cfcfcf" b="#e6e6e8" /></defs>
    <path d="M8 10l4-12 12-6 8-2 6-4 8 8 8-2 6-6 8 12 10-4 10 6 4 8-6 14H16z" fill="#ececec" />
    <path d="M16 0l10 14 6-14zM66 8l7-14 9 14zM40 12l6-12 8 10z" fill="#85878c" /><path d="M62 2l8 10 3-10z" fill="#c2542f" /><path d="M34 0l10 6-8 5z" fill="#57b879" /><path d="M54-4l9 8-7 8z" fill="#3f62ae" /><path d="M24-4l8-3 0 10z" fill="#666" />
    <path d="M6 4q44 26 88 0L84 96q-2 9-14 9H30q-12 0-14-9z" fill="url(#tr)" opacity=".97" />
    <path d="M6 4q2 12 44 13T94 4" stroke="#f4f4f4" strokeWidth="2.500" fill="none" />
    <path d="M22 32q10 30 6 58M70 30q-10 30 4 50" stroke="#efefef" strokeWidth="7" fill="none" opacity=".35" />
  </Tile>
);

const dock = [
  [Finder, true], [Launchpad], [ChromeApp, true], [Safari], [Mail], [Calendar], [Notes], [Keynote],
  [Settings, true, "1"], [Spotify], [Outlook], [Excel], [WhatsApp, true], [Word], [NotionCalendar], [RingApp], [Phone], [ReplitApp],
  null, [Webex], [Preview], [DiskUtility], null, [Zip], [Trash],
];

/* ---------- Menu bar status icons ---------- */

const VoiceIcon = () => (
  <Svg s={38} vb={38}><circle cx="19" cy="19" r="19" fill="#000" /><path d="M7 16v6M13 9v20M19 6v26M25 9v20M31 14v10" stroke="#fff" strokeWidth="3" strokeLinecap="round" /></Svg>
);
const ScreensIcon = () => (
  <Svg s={32} vb={32} fill="none" stroke="#9a9a9a" strokeWidth="2"><path d="M1 5l19 3v13L1 25zM11 12l20-2v17l-20-4z" /></Svg>
);
const DriveIcon = () => (
  <Svg><rect width="32" height="32" rx="4" fill="#ececec" /><path d="M13 5h6l8 15-3.500 6h-15L5 20z" fill="#292929" /><path d="M16 12l5.500 9h-11z" fill="#ececec" /></Svg>
);
const SpeakerIcon = () => (
  <Svg s={38} vb={38} fill="none" strokeLinecap="round" strokeWidth="2.600"><path d="M2 14h6l9-8v26l-9-8H2q-1 0-1-1v-8q0-1 1-1z" fill="#ededed" /><path d="M22 14q3 5 0 10M27 10q6 9 0 18" stroke="#ededed" /><path d="M32 7q8 12 0 24" stroke="#7a7a7a" /></Svg>
);
const BatteryIcon = () => (
  <svg width="52" height="26" viewBox="0 0 52 26"><rect x="1.500" y="1.500" width="44" height="23" rx="7" fill="none" stroke="#8a8a8a" strokeWidth="2.500" /><rect x="4.500" y="4.500" width="38" height="17" rx="4" fill="#ededed" /><path d="M48.500 8.500q3 4 0 9z" fill="#8a8a8a" /><path d="M28-1L14 14.500h8L18.500 27 33 11h-8z" fill="#ededed" stroke="#292929" strokeWidth="2.200" /></svg>
);
const WifiIcon = () => (
  <svg width="36" height="26" viewBox="0 0 36 26" fill="none" stroke="#ededed" strokeWidth="4.200"><path d="M2 9.500q16-14 32 0M8 15.800q10-8.500 20 0" /><path d="M18 25l-5.500-6q5.500-4.500 11 0z" fill="#ededed" stroke="none" /></svg>
);
const ControlIcon = () => (
  <svg width="27" height="28" viewBox="0 0 27 28"><rect x="1.300" y="1.300" width="24.400" height="10.400" rx="5.200" fill="none" stroke="#ededed" strokeWidth="2.400" /><circle cx="7" cy="6.500" r="3.600" fill="#ededed" /><rect x="0" y="15" width="27" height="13" rx="6.500" fill="#ededed" /><circle cx="20.500" cy="21.500" r="4" fill="#292929" /></svg>
);

const menus = [["Chrome", 103, true], ["Archivo", 92], ["Edición", 90], ["Visualización", 159], ["Historial", 101], ["Favoritos", 111], ["Perfiles", 92], ["Pestaña", 99], ["Ventana", 100], ["Ayuda", 76]];

export default function App() {
  return (
    <>
      <GlobalStyle />
      <Desktop>
        <DesktopLabel $right={23} $top={460}>8</DesktopLabel>
        <DesktopLabel $right={24} $top={494}>l</DesktopLabel>
        <DesktopLabel $right={18} $top={1164}>g</DesktopLabel>
        <DesktopLabel $right={18} $top={1356}>j</DesktopLabel>
        <DesktopLabel $right={22} $top={1581}>j</DesktopLabel>

        <MenuBar>
          <FaApple size={31} />
          <MenuList>
            {menus.map(([name, w, bold]) => (
              <MenuEntry key={name} $bold={bold}><Fit width={w}>{name}</Fit></MenuEntry>
            ))}
          </MenuList>
          <StatusArea>
            <StatusItem $w={72}><VoiceIcon /></StatusItem>
            <StatusItem $w={64}><ScreensIcon /></StatusItem>
            <StatusItem $w={67}><DriveIcon /></StatusItem>
            <StatusItem $w={78}><SpeakerIcon /></StatusItem>
            <StatusItem $w={65}><FaBluetoothB size={29} /></StatusItem>
            <StatusItem $w={82}><LangBox><Fit width={30}>ES</Fit></LangBox></StatusItem>
            <StatusItem $w={157} $size={22}><Fit width={59}>100%</Fit><BatteryIcon /></StatusItem>
            <StatusItem $w={73}><WifiIcon /></StatusItem>
            <StatusItem $w={67}><Search size={29} strokeWidth={2.3} /></StatusItem>
            <StatusItem $w={62}><ControlIcon /></StatusItem>
            <StatusItem $w={171}><Fit width={154}>Dom may 25</Fit></StatusItem>
            <StatusItem $w={69}><Fit width={70}>19:03</Fit></StatusItem>
          </StatusArea>
        </MenuBar>

        <Window>
          <TabStrip>
            <Lights><Light $c="#ec6a5e" /><Light $c="#f4be4f" /><Light $c="#61c454" /></Lights>
            {tabsBefore.map((tab, i) => <Tab key={i} tab={tab} />)}
            <ActiveTab>
              <Favicon><Globe /></Favicon>
              <TabTitle $w={24}>Inv</TabTitle>
              <CloseMark><X size={27} strokeWidth={2.4} color="#1f2023" /></CloseMark>
            </ActiveTab>
            {tabsAfter.map((tab, i) => <Tab key={i} tab={tab} w={164.3} />)}
            <NewTab><Plus size={32} strokeWidth={2.2} color="#1f2023" /></NewTab>
            <TabSearch><ChevronDown size={28} strokeWidth={2.8} color="#1f2023" /></TabSearch>
          </TabStrip>

          <ToolbarBack>
            <Toolbar>
              <ToolIcon $w={32}><ArrowLeft size={36} strokeWidth={2} /></ToolIcon>
              <ToolIcon $w={112} $c="#a3a3a3"><ArrowRight size={36} strokeWidth={2} /></ToolIcon>
              <ToolIcon $w={32}><RotateCw size={30} strokeWidth={2.3} /></ToolIcon>
              <ToolIcon $w={36} />
              <Omnibox>
                <SiteInfo>
                  <Svg s={26} vb={26} fill="none" stroke="#1f2023" strokeWidth="2.600"><circle cx="5.500" cy="6" r="3.600" /><path d="M13 6h11M2 20h10" /><circle cx="20.500" cy="20" r="3.600" /></Svg>
                </SiteInfo>
                <Fit width={1020}>939e9f70-3a11-424c-b3f1-851ebe369402-00-d5aozswkg5ls.worf.replit.dev</Fit>
                <StarSlot><Star size={32} strokeWidth={2} color="#5f6368" /></StarSlot>
              </Omnibox>
              <ToolIcon $w={104}>
                <Svg s={34} vb={34} fill="none" stroke="#1f2023" strokeWidth="3.400" strokeLinejoin="round">
                  <path d="M4 6.500h8q.5-4.500 4-4.500t4 4.500h8.500v8q4 .5 4 4t-4 4v8.500H4v-7.500q4.500-1 4.500-5t-4.500-5z" />
                </Svg>
              </ToolIcon>
              <GreenRule />
              <ToolIcon $w={104}>
                <Avatar>
                  <Svg s={40} vb={40}>
                    <rect width="40" height="40" fill="#777" /><path d="M0 14l12-6 2 26-14 2z" fill="#2b2b2b" /><path d="M2 18h8M1 24h10M3 30h9" stroke="#ddd" strokeWidth="2" />
                    <path d="M14 12q2-9 12-8 8 2 7 14 0 14-8 16-9-2-11-22z" fill="#c4c4c4" /><path d="M13 14q1-13 13-12 9 2 9 12-8-6-15-5-4 1-5 12z" fill="#222" /><path d="M18 15h6v3.500h-6zM26 14.500h6V18h-6z" fill="#333" /><path d="M22 27h6l-3 3z" fill="#8a8a8a" /><path d="M10 40l6-10 9 6 8-6v11z" fill="#3c3c3c" />
                  </Svg>
                </Avatar>
              </ToolIcon>
              <ToolIcon $w={40}>
                <Svg s={32} vb={32} fill="#1f2023"><circle cx="16" cy="5" r="3" /><circle cx="16" cy="16" r="3" /><circle cx="16" cy="27" r="3" /></Svg>
              </ToolIcon>
            </Toolbar>
          </ToolbarBack>

          <BookmarkBar>
            <GridSlot>
              <Svg s={28} vb={28} fill="none" stroke="#1f2023" strokeWidth="3"><rect x="1.500" y="1.500" width="9" height="9" /><rect x="17.500" y="1.500" width="9" height="9" /><rect x="1.500" y="17.500" width="9" height="9" /><rect x="17.500" y="17.500" width="9" height="9" /></Svg>
            </GridSlot>
            <Bookmark $w={32}><GreenRule /></Bookmark>
            {bookmarks.map((b) => (
              <Bookmark key={b.t} $w={b.w}><BookmarkIcon>{b.icon}</BookmarkIcon><Fit width={b.tw}>{b.t}</Fit></Bookmark>
            ))}
            <Overflow><ChevronsRight size={34} strokeWidth={2.2} /></Overflow>
          </BookmarkBar>

          <SiteHeader>
            <Brand>
              <svg width="148" height="68" viewBox="0 0 148 68" fill="none" stroke="#56b685" strokeWidth="6.200" strokeLinejoin="round">
                <path d="M30.500 54.500L49 22q4.500-6.500 9 0L80 60q4.500 6.500 9.500 0L118 10q2-5.500-3-7H96q-4 0-6 3L60 57q-2 5-6 5H35q-7.500-1-4.500-7.500z" />
              </svg>
              <BrandName><Fit width={138}>Invernor</Fit><BrandDot /></BrandName>
            </Brand>
            <SiteNav>
              <NavLink $active><Fit width={82}>Inicio</Fit></NavLink>
              <NavLink><Fit width={228}>Quiénes Somos</Fit></NavLink>
              <NavLink><Fit width={215}>Oportunidades</Fit></NavLink>
              <NavLink><Fit width={194}>Proyecciones</Fit></NavLink>
              <NavLink><Fit width={134}>Contacto</Fit></NavLink>
              <RoundButton><Search size={32} strokeWidth={1.9} /></RoundButton>
              <RoundButton><Moon size={32} strokeWidth={1.9} /></RoundButton>
            </SiteNav>
          </SiteHeader>

          <Hero>
            <Title>
              <TitleAccent><Fit width={529}>Invenor:</Fit></TitleAccent>
              <Fit width={2290}>infraestructura que se convierte en</Fit>
              <TitleAccent><Fit width={787}>rentabilidad</Fit></TitleAccent>
            </Title>
            <Lead>
              <Fit width={1759}>Desarrollamos activos estratégicos en el norte de Chile, transformando infraestructura</Fit>
              <Fit width={1114}>en oportunidades de inversión sostenibles y rentables.</Fit>
            </Lead>
            <Cta><Fit width={438}>Explorar Oportunidades</Fit><ChevronRight size={48} strokeWidth={2} /></Cta>
            <ScrollHint><ArrowDown size={48} strokeWidth={2} /></ScrollHint>
          </Hero>

          <ChatButton><MessageCircle size={48} strokeWidth={2} /></ChatButton>
        </Window>

        <Dock>
          {dock.map((entry, i) => {
            if (!entry) return <DockRule key={i} />;
            const [Icon, running, badge] = entry;
            return (
              <DockSlot key={i}>
                <Icon />
                {running && <RunningDot />}
                {badge && <Badge>{badge}</Badge>}
              </DockSlot>
            );
          })}
        </Dock>
      </Desktop>
    </>
  );
}
